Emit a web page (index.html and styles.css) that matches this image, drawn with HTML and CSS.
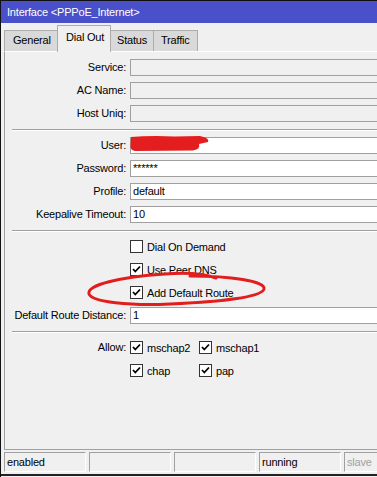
FILE: index.html
```html
<!DOCTYPE html>
<html>
<head>
<meta charset="utf-8">
<link rel="stylesheet" href="styles.css">
</head>
<body>
<div class="window">
  <div class="titlebar">Interface &lt;PPPoE_Internet&gt;</div>
  <div class="tabs">
    <div class="tab">General</div>
    <div class="tab active">Dial Out</div>
    <div class="tab">Status</div>
    <div class="tab">Traffic</div>
  </div>
  <div class="panel">
    <div class="form">
      <div class="label">Service:</div><div class="input disabled"></div>
      <div class="label">AC Name:</div><div class="input disabled"></div>
      <div class="label">Host Uniq:</div><div class="input disabled"></div>
    </div>
    <div class="sep"></div>
    <div class="form">
      <div class="label">User:</div>
      <div class="input user">
        <svg class="redact" width="82" height="18" viewBox="0 -2 82 18"><path d="M1 0 Q20 -1.5 45 -0.5 L70 -1 Q80 1 78 5 L69 7 Q71 12 63 13.5 L5 14 Q0 13 0.5 9 Z" fill="#e41e1e"/></svg>
      </div>
      <div class="label">Password:</div><div class="input">******</div>
      <div class="label">Profile:</div><div class="input">default</div>
      <div class="label">Keepalive Timeout:</div><div class="input">10</div>
    </div>
    <div class="sep"></div>
    <div class="form">
      <div class="label"></div>
      <div class="check"><span class="box"></span>Dial On Demand</div>
      <div class="label"></div>
      <div class="check"><span class="box"><svg width="11" height="11" viewBox="0 0 11 11"><path d="M2 5 L4.3 7.5 L9 2.5" fill="none" stroke="#000" stroke-width="1.8"/></svg></span>Use Peer DNS</div>
      <div class="label"></div>
      <div class="check"><span class="box"><svg width="11" height="11" viewBox="0 0 11 11"><path d="M2 5 L4.3 7.5 L9 2.5" fill="none" stroke="#000" stroke-width="1.8"/></svg></span>Add Default Route</div>
      <div class="label">Default Route Distance:</div><div class="input">1</div>
    </div>
    <div class="sep"></div>
    <div class="form">
      <div class="label">Allow:</div>
      <div class="checks">
        <div class="check item"><span class="box"><svg width="11" height="11" viewBox="0 0 11 11"><path d="M2 5 L4.3 7.5 L9 2.5" fill="none" stroke="#000" stroke-width="1.8"/></svg></span>mschap2</div>
        <div class="check item"><span class="box"><svg width="11" height="11" viewBox="0 0 11 11"><path d="M2 5 L4.3 7.5 L9 2.5" fill="none" stroke="#000" stroke-width="1.8"/></svg></span>mschap1</div>
      </div>
      <div class="label"></div>
      <div class="checks">
        <div class="check item"><span class="box"><svg width="11" height="11" viewBox="0 0 11 11"><path d="M2 5 L4.3 7.5 L9 2.5" fill="none" stroke="#000" stroke-width="1.8"/></svg></span>chap</div>
        <div class="check item"><span class="box"><svg width="11" height="11" viewBox="0 0 11 11"><path d="M2 5 L4.3 7.5 L9 2.5" fill="none" stroke="#000" stroke-width="1.8"/></svg></span>pap</div>
      </div>
    </div>
  </div>
  <div class="statusbar">
    <div class="cell">enabled</div>
    <div class="cell"></div>
    <div class="cell"></div>
    <div class="cell">running</div>
    <div class="cell dim last">slave</div>
  </div>
  <svg class="circle" width="195" height="42" viewBox="80 268 195 42"><path d="M190 276 C230 276 266 281 264 289 C262 297 220 302 170 304 C130 306 92 302 89 294 C86 285 120 277 165 274 C190 272 205 274 216 278" fill="none" stroke="#e21d1d" stroke-width="3" stroke-linecap="round"/></svg>
</div>
</body>
</html>
```
FILE: styles.css
```css
html, body {
  margin: 0;
  padding: 0;
  overflow: hidden;
  background: #f0f0f0;
}
.window {
  position: relative;
  width: 377px;
  height: 477px;
  box-sizing: border-box;
  overflow: hidden;
  border-top: 1px solid #111;
  border-left: 1px solid #111;
  background: #f0f0f0;
  font-family: "Liberation Sans", Arial, sans-serif;
  font-size: 11px;
  letter-spacing: -0.2px;
  color: #000;
}
.titlebar {
  height: 22px;
  background: #4a4fca;
  color: #fff;
  font-size: 11px;
  line-height: 22px;
  padding-left: 6px;
}
.tabs {
  display: flex;
  align-items: flex-end;
  height: 28px;
  padding-left: 3px;
}
.tab {
  box-sizing: border-box;
  height: 21px;
  line-height: 19px;
  padding: 0 0 0 8px;
  white-space: nowrap;
  background: #d9d9d9;
  border: 1px solid #acacac;
  border-bottom: none;
  margin-right: -1px;
}
.tab:nth-child(1) { width: 54px; }
.tab:nth-child(2) { width: 54px; }
.tab:nth-child(3) { width: 44px; padding-left: 6px; }
.tab:nth-child(4) { width: 45px; padding-left: 7px; }
.tab.active {
  height: 27px;
  line-height: 23px;
  background: #f0f0f0;
  position: relative;
  z-index: 1;
  margin-bottom: -1px;
}
.panel {
  margin-left: 3px;
  height: 399px;
  box-sizing: border-box;
  border-top: 1px solid #fff;
  border-left: 1px solid #a0a0a0;
  border-bottom: 1px solid #a0a0a0;
  padding-top: 7px;
}
.form {
  display: grid;
  grid-template-columns: 121px 1fr;
  column-gap: 4px;
  row-gap: 6px;
}
.label {
  height: 17px;
  line-height: 17px;
  text-align: right;
  white-space: nowrap;
}
.input {
  position: relative;
  box-sizing: border-box;
  height: 17px;
  line-height: 15px;
  background: #fff;
  border-top: 1px solid #a0a0a0;
  border-bottom: 1px solid #a0a0a0;
  border-left: 1px solid #a0a0a0;
  padding-left: 2px;
}
.input.disabled {
  background: #f0f0f0;
}
.redact {
  position: absolute;
  left: -1px;
  top: -3px;
}
.sep {
  margin: 7px 0 6px 7px;
  border-top: 1px solid #a0a0a0;
  border-bottom: 1px solid #fff;
}
.check {
  display: flex;
  align-items: center;
  height: 17px;
  white-space: nowrap;
}
.box {
  box-sizing: border-box;
  width: 13px;
  height: 13px;
  border: 1px solid #333;
  background: #fff;
  margin-right: 4px;
  display: flex;
}
.checks {
  display: flex;
}
.item {
  width: 69px;
}
.statusbar {
  display: flex;
  gap: 3px;
  padding: 2px 0 0 3px;
}
.cell {
  box-sizing: border-box;
  width: 82px;
  height: 20px;
  line-height: 18px;
  padding-left: 2px;
  border-top: 1px solid #a0a0a0;
  border-left: 1px solid #a0a0a0;
  border-right: 1px solid #fff;
  border-bottom: 1px solid #fff;
}
.cell.last {
  flex: 1;
  border-right: none;
}
.cell.dim {
  color: #a0a0a0;
}
.circle {
  position: absolute;
  left: 79px;
  top: 267px;
}
.window::after {
  content: "";
  position: absolute;
  left: 0;
  right: 0;
  top: 473px;
  height: 2px;
  background: #222;
}
```
